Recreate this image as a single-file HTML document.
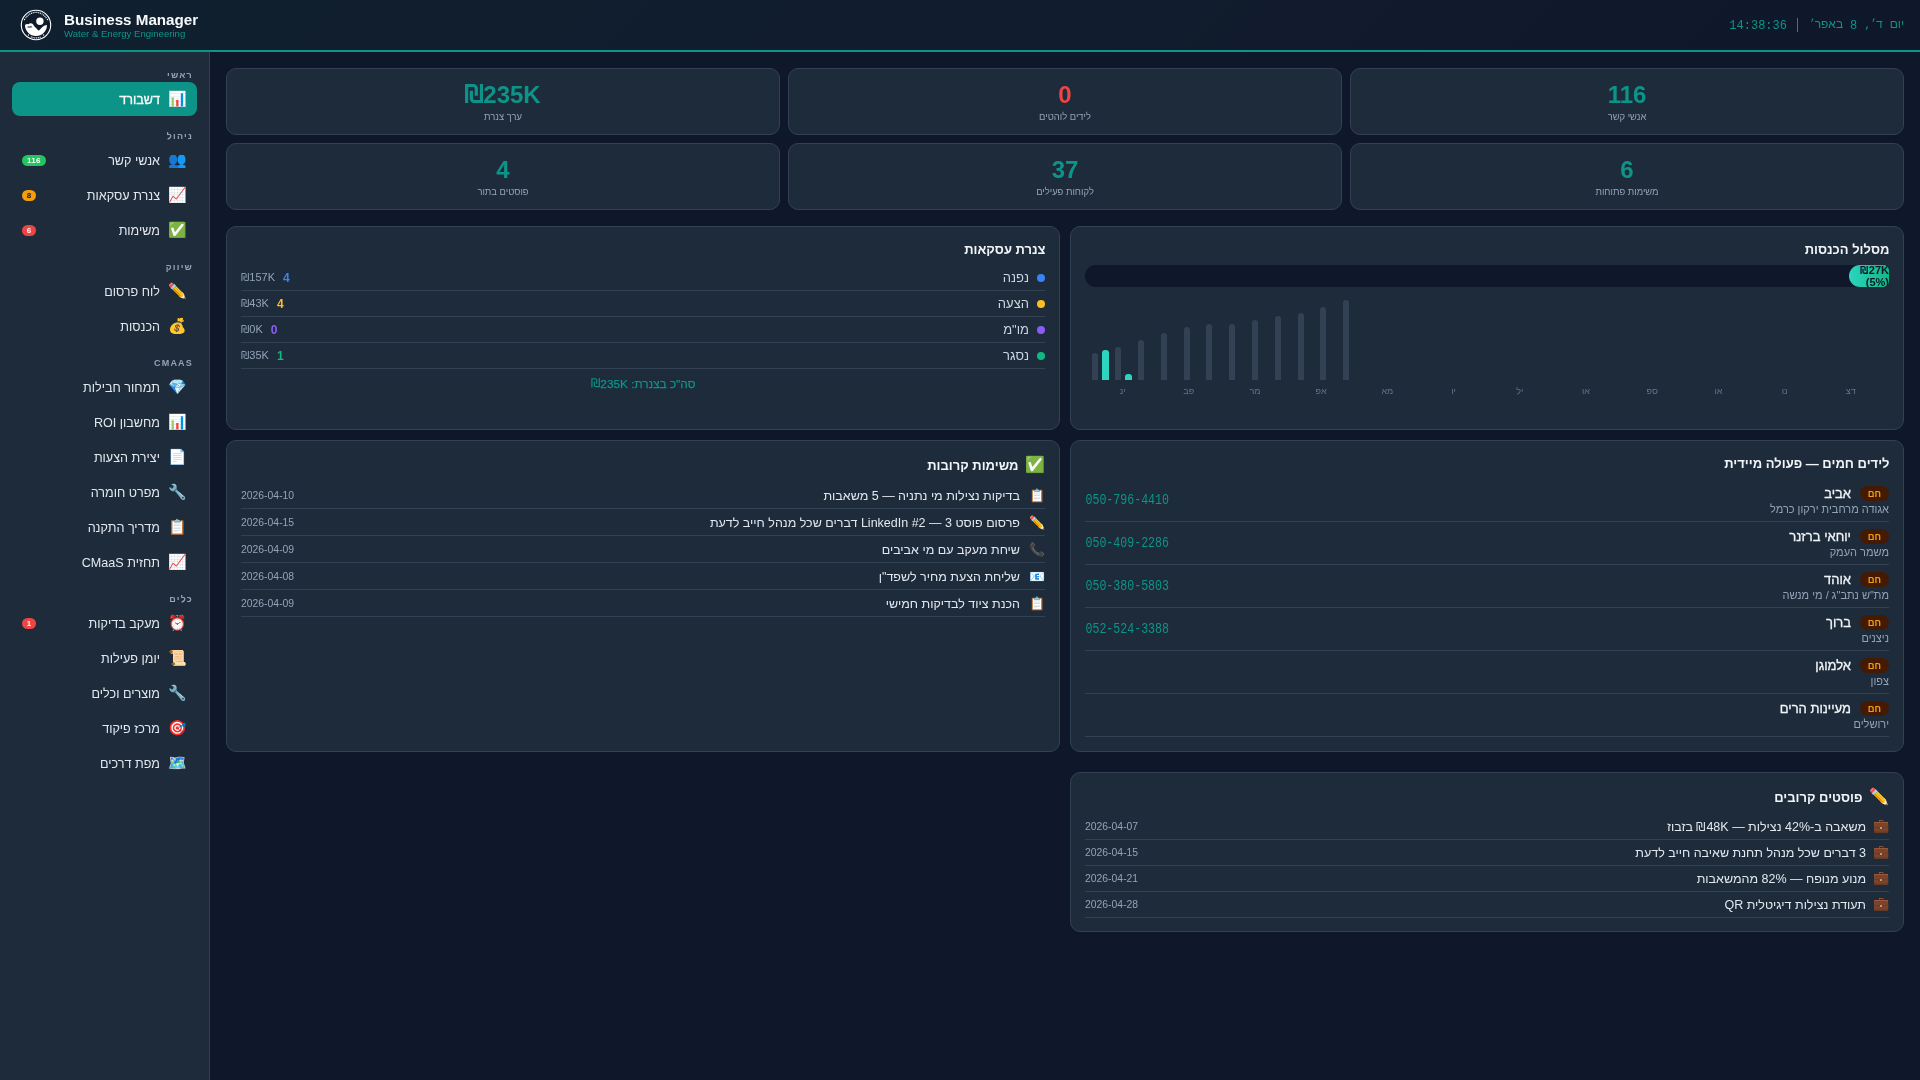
<!DOCTYPE html>
<html lang="he" dir="rtl">
<head>
<meta charset="utf-8">
<style>
*{box-sizing:border-box;margin:0;padding:0}
body{will-change:transform}
html,body{width:1920px;height:1080px;overflow:hidden;background:#0f172a;font-family:"Liberation Sans",sans-serif;color:#e2e8f0}
.emo{font-family:"Liberation Sans",sans-serif}
/* header */
#hdr{position:absolute;left:0;top:0;width:1920px;height:52px;background:linear-gradient(135deg,#10202f 0%,#111d2e 45%,#0f172a 100%);border-bottom:2px solid #0d9488}
#logo{position:absolute;left:20px;top:9px;width:32px;height:32px}
#brand{position:absolute;left:64px;top:11px;direction:ltr;text-align:left}
#brand .t{font-size:15.2px;font-weight:bold;color:#f8fafc;line-height:18px;letter-spacing:0}
#brand .s{font-size:9.6px;color:#0d9488;line-height:12px;margin-top:-1px}
#clock{position:absolute;right:16px;top:17px;font-family:"Liberation Mono",monospace;font-size:11.7px;color:#0d9488;line-height:14px;white-space:nowrap}
#clock .dg{font-size:12px;display:inline-block;transform:scaleY(1.13);transform-origin:0 70%;position:relative;top:1px}
#clock .pp{display:inline-block;transform:scaleY(1.2);margin-right:2px}
#clock .h{font-family:"Liberation Sans",sans-serif;font-size:12px}
/* sidebar */
#side{position:absolute;left:0;top:52px;width:210px;height:1028px;background:#1d2b3a;border-right:1px solid #334155}
.sec{position:absolute;right:16px;font-size:9px;font-weight:bold;letter-spacing:1.2px;color:#94a3b8;line-height:10px;margin-top:0.5px}
.nav{position:absolute;left:12px;width:185px;height:34px;border-radius:8px}
.nav.act{background:#0d9488}
.nav .ic{position:absolute;right:10.3px;top:8px;font-size:15px;line-height:18px}
.nav .tx{position:absolute;right:37px;top:10.5px;font-size:12.6px;line-height:15px;color:#e2e8f0;white-space:nowrap}
.nav.act .tx{color:#fff;-webkit-text-stroke:0.3px #fff}
.bdg{position:absolute;left:10px;top:12px;height:11px;border-radius:6px;font-size:8px;font-weight:bold;color:#fff;line-height:11px;text-align:center;padding:0 5px;min-width:14px;letter-spacing:0.3px}
/* main */
.card{position:absolute;background:#1d2b3a;border:1px solid #334155;border-radius:10px}
.stat{height:67px;width:554px;text-align:center}
.stat .n{position:absolute;left:0;right:0;top:11.5px;direction:ltr;font-size:24px;font-weight:bold;line-height:28px;color:#0d9488}
.shq{vertical-align:baseline;margin-right:0px;position:relative;top:0px}
.shs{width:0.75em;height:0.72em;vertical-align:baseline;margin-right:0.05em;overflow:visible}
.shs path{fill:none;stroke:currentColor;stroke-width:2.3}
.shs.b path{stroke-width:3.1}
.stat .l{position:absolute;left:0;right:0;top:42px;font-size:9.4px;line-height:12px;color:#94a3b8}
.temo{font-size:16px;margin-left:7px;vertical-align:-1px;position:relative;top:-0.7px;left:-1px}
.ptitle{position:absolute;right:13.5px;font-size:13px;font-weight:bold;color:#f1f5f9;line-height:16px;white-space:nowrap}
.row{position:absolute;left:14px;right:14px;border-bottom:1px solid #334155}

.prow{position:absolute;left:14px;right:14px;height:26px;border-bottom:1px solid #334155}
.prow .dot{position:absolute;right:0;top:9.4px;width:8px;height:8px;border-radius:50%}
.prow .pl{position:absolute;right:16px;top:6px;font-size:13px;line-height:14px;color:#cbd5e1}
.prow .pv{position:absolute;left:-0.5px;top:5px;font-size:11px;line-height:14px;direction:ltr;white-space:nowrap}
.prow .pv i{font-style:normal;color:#94a3b8;float:left}
.prow .pv b{float:right;margin-left:8px;font-size:12px;position:relative;top:1px}
.ptot{position:absolute;left:0;right:0;top:150.5px;text-align:center;font-size:11.8px;font-weight:normal;color:#0d9488;line-height:13px;-webkit-text-stroke:0.25px #0d9488}
.ptot .shs{height:0.8em;width:0.78em}
.trow{position:absolute;left:14px;right:14px;height:27px;border-bottom:1px solid #334155}
.trow .ti{position:absolute;right:0;top:6px;font-size:13px;line-height:16px}
.posts .trow .ti{right:0px;top:5px}
.posts .trow .tt{right:23px;top:6.5px}
.trow .tt{position:absolute;right:25px;top:6.5px;font-size:12.5px;line-height:14px;color:#e2e8f0;white-space:nowrap}
.trow .td{position:absolute;left:0;top:8px;font-size:10.4px;line-height:12px;color:#94a3b8}
.lrow{position:absolute;left:14px;right:14px;height:43px;border-bottom:1px solid #334155}
.lrow .hot{position:absolute;right:0;top:7px;width:29px;height:15px;border-radius:8px;background:#451a03;color:#f59e0b;font-size:9.4px;font-weight:bold;text-align:center;line-height:16.5px}
.lrow .ln{position:absolute;right:38px;top:7px;font-size:13px;font-weight:normal;-webkit-text-stroke:0.3px #f1f5f9;color:#f1f5f9;line-height:15px;white-space:nowrap}
.lrow .ls{position:absolute;right:0;top:24px;font-size:11px;color:#94a3b8;line-height:13px;white-space:nowrap}
.lrow .lp{position:absolute;left:0.5px;top:13px;transform:scaleY(1.22);transform-origin:0 0;font-family:"Liberation Mono",monospace;font-size:11.6px;color:#0d9488;line-height:14px;direction:ltr}

.track{position:absolute;left:14px;top:38px;width:804px;height:22px;border-radius:11px 5px 5px 11px;background:#0f172a;overflow:hidden}
.fill{position:absolute;right:0;top:0;width:40px;height:22px;border-radius:11px 5px 5px 11px;background:linear-gradient(90deg,#2dd4bf,#10b981)}
.ftx{position:absolute;right:0px;top:-1px;width:40px;font-size:11px;font-weight:bold;line-height:12px;color:#0f172a;text-align:right;direction:ltr;padding-left:11px;white-space:nowrap}
.bar{position:absolute;width:6.3px;background:#334155;border-radius:3px 3px 0 0}
.bar.tb{background:#2dd4bf;width:6.6px}
.mlab{position:absolute;top:159px;width:40px;text-align:center;font-size:9px;line-height:11px;color:#64748b}
</style>
</head>
<body>
<div id="hdr">
  <svg id="logo" viewBox="0 0 32 32">
    <circle cx="16" cy="16" r="14.7" fill="#0f1b2d" stroke="#fff" stroke-width="1.1"/>
    <path d="M5.6 9.2A12.2 12.2 0 0 1 26.4 9.2" fill="none" stroke="#dfe6ee" stroke-width="1.3" stroke-dasharray="1.1 0.7"/>
    <path d="M10.8 27.8A12.2 12.2 0 0 0 21.2 27.8" fill="none" stroke="#dfe6ee" stroke-width="1.3" stroke-dasharray="1.1 0.7"/>
    <circle cx="4.5" cy="10.6" r="0.75" fill="#fff"/><circle cx="27.5" cy="10.6" r="0.75" fill="#fff"/>
    <circle cx="8.5" cy="26" r="0.7" fill="#fff"/><circle cx="23.5" cy="26" r="0.7" fill="#fff"/>
    <path d="M5 16Q6.5 14.6 8.5 15.2Q10 13.6 12 14.6Q13.4 15.4 14 17L18.7 21.7L22.4 18Q24.4 16.2 27 16A11 11 0 0 1 5 16Z" fill="#fff"/><path d="M7.5 17.2h3v1.6h-3z M11 16.6l1.5 1.8h-3z" fill="#0f1b2d" opacity="0.7"/>
    <circle cx="19.9" cy="12.2" r="3.7" fill="#fff"/>
  </svg>
  <div id="brand"><div class="t">Business Manager</div><div class="s">Water &amp; Energy Engineering</div></div>
  <div id="clock"><span class="h">יום</span> <span class="h">ד׳</span>, <span class="dg">8</span> <span class="h">באפר׳</span> <span class="pp">|</span> <span class="dg">14:38:36</span></div>
</div>

<div id="side">
  <div class="sec" style="top:17px">ראשי</div>
  <div class="nav act" style="top:30px"><span class="ic emo">📊</span><span class="tx">דשבורד</span></div>
  <div class="sec" style="top:78px">ניהול</div>
  <div class="nav" style="top:91px"><span class="ic emo">👥</span><span class="tx">אנשי קשר</span><span class="bdg" style="background:#22c55e">116</span></div>
  <div class="nav" style="top:126px"><span class="ic emo">📈</span><span class="tx">צנרת עסקאות</span><span class="bdg" style="background:#f59e0b;color:#0f172a;padding:0">8</span></div>
  <div class="nav" style="top:161px"><span class="ic emo">✅</span><span class="tx">משימות</span><span class="bdg" style="background:#ef4444;padding:0">6</span></div>
  <div class="sec" style="top:209px">שיווק</div>
  <div class="nav" style="top:222px"><span class="ic emo">✏️</span><span class="tx">לוח פרסום</span></div>
  <div class="nav" style="top:257px"><span class="ic emo">💰</span><span class="tx">הכנסות</span></div>
  <div class="sec" style="top:305px">CMAAS</div>
  <div class="nav" style="top:318px"><span class="ic emo">💎</span><span class="tx">תמחור חבילות</span></div>
  <div class="nav" style="top:353px"><span class="ic emo">📊</span><span class="tx">מחשבון ROI</span></div>
  <div class="nav" style="top:388px"><span class="ic emo">📄</span><span class="tx">יצירת הצעות</span></div>
  <div class="nav" style="top:423px"><span class="ic emo">🔧</span><span class="tx">מפרט חומרה</span></div>
  <div class="nav" style="top:458px"><span class="ic emo">📋</span><span class="tx">מדריך התקנה</span></div>
  <div class="nav" style="top:493px"><span class="ic emo">📈</span><span class="tx">תחזית CMaaS</span></div>
  <div class="sec" style="top:541px">כלים</div>
  <div class="nav" style="top:554px"><span class="ic emo">⏰</span><span class="tx">מעקב בדיקות</span><span class="bdg" style="background:#ef4444;padding:0">1</span></div>
  <div class="nav" style="top:589px"><span class="ic emo">📜</span><span class="tx">יומן פעילות</span></div>
  <div class="nav" style="top:624px"><span class="ic emo">🔧</span><span class="tx">מוצרים וכלים</span></div>
  <div class="nav" style="top:659px"><span class="ic emo">🎯</span><span class="tx">מרכז פיקוד</span></div>
  <div class="nav" style="top:694px"><span class="ic emo">🗺️</span><span class="tx">מפת דרכים</span></div>
</div>

<div id="main">
  <div class="card stat" style="left:1350px;top:68px"><div class="n">116</div><div class="l">אנשי קשר</div></div>
  <div class="card stat" style="left:788px;top:68px"><div class="n" style="color:#ef4444">0</div><div class="l">לידים לוהטים</div></div>
  <div class="card stat" style="left:226px;top:68px"><div class="n"><svg class="shq" width="18" height="19" viewBox="0 0 18 19"><path d="M1.65 19V1.5H8.3A3 3 0 0 1 11.3 4.5V11.7M6.35 6.8V14.5A3 3 0 0 0 9.35 17.5H16.45V0" fill="none" stroke="#0d9488" stroke-width="3.2"/></svg>235K</div><div class="l">ערך צנרת</div></div>
  <div class="card stat" style="left:1350px;top:143px"><div class="n">6</div><div class="l">משימות פתוחות</div></div>
  <div class="card stat" style="left:788px;top:143px"><div class="n">37</div><div class="l">לקוחות פעילים</div></div>
  <div class="card stat" style="left:226px;top:143px"><div class="n">4</div><div class="l">פוסטים בתור</div></div>

  <div class="card" id="rev" style="left:1070px;top:226px;width:834px;height:204px">
    <div class="ptitle" style="top:15px">מסלול הכנסות</div>

    <div class="track"><div class="fill"></div><div class="ftx"><svg class="shs b" viewBox="0 0 18 19"><path d="M1.6 19V1.6H8.3A3 3 0 0 1 11.3 4.6V11.7M6.35 6.8V14.4A3 3 0 0 0 9.35 17.4H16.4V0"/></svg>27K<br>(5%)</div></div>
    <div class="bar" style="left:21.2px;top:126.0px;height:27.0px"></div><div class="bar" style="left:44.0px;top:119.7px;height:33.3px"></div><div class="bar" style="left:67.0px;top:113.0px;height:40.0px"></div><div class="bar" style="left:90.0px;top:106.0px;height:47.0px"></div><div class="bar" style="left:113.0px;top:100.0px;height:53.0px"></div><div class="bar" style="left:135.1px;top:97.0px;height:56.0px"></div><div class="bar" style="left:158.0px;top:97.0px;height:56.0px"></div><div class="bar" style="left:180.9px;top:93.0px;height:60.0px"></div><div class="bar" style="left:203.8px;top:89.0px;height:64.0px"></div><div class="bar" style="left:226.5px;top:86.2px;height:66.8px"></div><div class="bar" style="left:249.2px;top:79.8px;height:73.2px"></div><div class="bar" style="left:271.9px;top:73.0px;height:80.0px"></div><div class="bar tb" style="left:31.4px;top:122.6px;height:30.4px"></div><div class="bar tb" style="left:54.0px;top:146.5px;height:6.5px"></div><div class="mlab" style="left:31.6px">ינ</div><div class="mlab" style="left:97.8px">פב</div><div class="mlab" style="left:164.0px">מר</div><div class="mlab" style="left:230.2px">אפ</div><div class="mlab" style="left:296.4px">מא</div><div class="mlab" style="left:362.6px">יו</div><div class="mlab" style="left:428.8px">יל</div><div class="mlab" style="left:495.0px">או</div><div class="mlab" style="left:561.2px">ספ</div><div class="mlab" style="left:627.4px">או</div><div class="mlab" style="left:693.6px">נו</div><div class="mlab" style="left:759.8px">דצ</div>
  </div>
  <div class="card" id="pipe" style="left:226px;top:226px;width:834px;height:204px">
    <div class="ptitle" style="top:15px">צנרת עסקאות</div>

    <div class="prow" style="top:38px"><span class="dot" style="background:#3b82f6"></span><span class="pl">נפנה</span><span class="pv"><b style="color:#3b82f6">4</b><i><svg class="shs" viewBox="0 0 18 19"><path d="M1.2 19V1.2H8.3A3 3 0 0 1 11.3 4.2V11.7M6.35 6.8V14.8A3 3 0 0 0 9.35 17.8H16.8V0"/></svg>157K</i></span></div>
    <div class="prow" style="top:64px"><span class="dot" style="background:#fbbf24"></span><span class="pl">הצעה</span><span class="pv"><b style="color:#fbbf24">4</b><i><svg class="shs" viewBox="0 0 18 19"><path d="M1.2 19V1.2H8.3A3 3 0 0 1 11.3 4.2V11.7M6.35 6.8V14.8A3 3 0 0 0 9.35 17.8H16.8V0"/></svg>43K</i></span></div>
    <div class="prow" style="top:90px"><span class="dot" style="background:#8b5cf6"></span><span class="pl">מו"מ</span><span class="pv"><b style="color:#8b5cf6">0</b><i><svg class="shs" viewBox="0 0 18 19"><path d="M1.2 19V1.2H8.3A3 3 0 0 1 11.3 4.2V11.7M6.35 6.8V14.8A3 3 0 0 0 9.35 17.8H16.8V0"/></svg>0K</i></span></div>
    <div class="prow" style="top:116px"><span class="dot" style="background:#10b981"></span><span class="pl">נסגר</span><span class="pv"><b style="color:#10b981">1</b><i><svg class="shs" viewBox="0 0 18 19"><path d="M1.2 19V1.2H8.3A3 3 0 0 1 11.3 4.2V11.7M6.35 6.8V14.8A3 3 0 0 0 9.35 17.8H16.8V0"/></svg>35K</i></span></div>
    <div class="ptot">סה"כ בצנרת: <span dir="ltr"><svg class="shs" viewBox="0 0 18 19"><path d="M1.6 19V1.6H8.3A3 3 0 0 1 11.3 4.6V11.7M6.35 6.8V14.4A3 3 0 0 0 9.35 17.4H16.4V0"/></svg>235K</span></div>
  </div>
  <div class="card" id="leads" style="left:1070px;top:440px;width:834px;height:312px">
    <div class="ptitle" style="top:15px">לידים חמים — פעולה מיידית</div>

    <div class="lrow" style="top:38px"><span class="hot">חם</span><span class="ln">אביב</span><span class="ls">אגודה מרחבית ירקון כרמל</span><span class="lp">050-796-4410</span></div>
    <div class="lrow" style="top:81px"><span class="hot">חם</span><span class="ln">יוחאי ברזנר</span><span class="ls">משמר העמק</span><span class="lp">050-409-2286</span></div>
    <div class="lrow" style="top:124px"><span class="hot">חם</span><span class="ln">אוהד</span><span class="ls">מת"ש נתב"ג / מי מנשה</span><span class="lp">050-380-5803</span></div>
    <div class="lrow" style="top:167px"><span class="hot">חם</span><span class="ln">ברוך</span><span class="ls">ניצנים</span><span class="lp">052-524-3388</span></div>
    <div class="lrow" style="top:210px"><span class="hot">חם</span><span class="ln">אלמוגן</span><span class="ls">צפון</span></div>
    <div class="lrow" style="top:253px"><span class="hot">חם</span><span class="ln">מעיינות הרים</span><span class="ls">ירושלים</span></div>
  </div>
  <div class="card" id="tasks" style="left:226px;top:440px;width:834px;height:312px">
    <div class="ptitle" style="top:17px"><span class="temo emo">✅</span>משימות קרובות</div>

    <div class="trow" style="top:41px"><span class="ti emo">📋</span><span class="tt">בדיקות נצילות מי נתניה — 5 משאבות</span><span class="td">2026-04-10</span></div>
    <div class="trow" style="top:68px"><span class="ti emo">✏️</span><span class="tt">פרסום פוסט 3 — LinkedIn #2 דברים שכל מנהל חייב לדעת</span><span class="td">2026-04-15</span></div>
    <div class="trow" style="top:95px"><span class="ti emo">📞</span><span class="tt">שיחת מעקב עם מי אביבים</span><span class="td">2026-04-09</span></div>
    <div class="trow" style="top:122px"><span class="ti emo">📧</span><span class="tt">שליחת הצעת מחיר לשפד"ן</span><span class="td">2026-04-08</span></div>
    <div class="trow" style="top:149px"><span class="ti emo">📋</span><span class="tt">הכנת ציוד לבדיקות חמישי</span><span class="td">2026-04-09</span></div>
  </div>
  <div class="card posts" id="posts" style="left:1070px;top:772px;width:834px;height:160px">
    <div class="ptitle" style="top:17px"><span class="temo emo">✏️</span>פוסטים קרובים</div>

    <div class="trow" style="top:40px"><span class="ti emo">💼</span><span class="tt">משאבה ב-42% נצילות — <span dir="ltr"><svg class="shs" viewBox="0 0 18 19"><path d="M1.2 19V1.2H8.3A3 3 0 0 1 11.3 4.2V11.7M6.35 6.8V14.8A3 3 0 0 0 9.35 17.8H16.8V0"/></svg>48K</span> בזבוז</span><span class="td">2026-04-07</span></div>
    <div class="trow" style="top:66px"><span class="ti emo">💼</span><span class="tt">3 דברים שכל מנהל תחנת שאיבה חייב לדעת</span><span class="td">2026-04-15</span></div>
    <div class="trow" style="top:92px"><span class="ti emo">💼</span><span class="tt">מנוע מנופח — 82% מהמשאבות</span><span class="td">2026-04-21</span></div>
    <div class="trow" style="top:118px"><span class="ti emo">💼</span><span class="tt">תעודת נצילות דיגיטלית QR</span><span class="td">2026-04-28</span></div>
  </div>
</div>
</body>
</html>
